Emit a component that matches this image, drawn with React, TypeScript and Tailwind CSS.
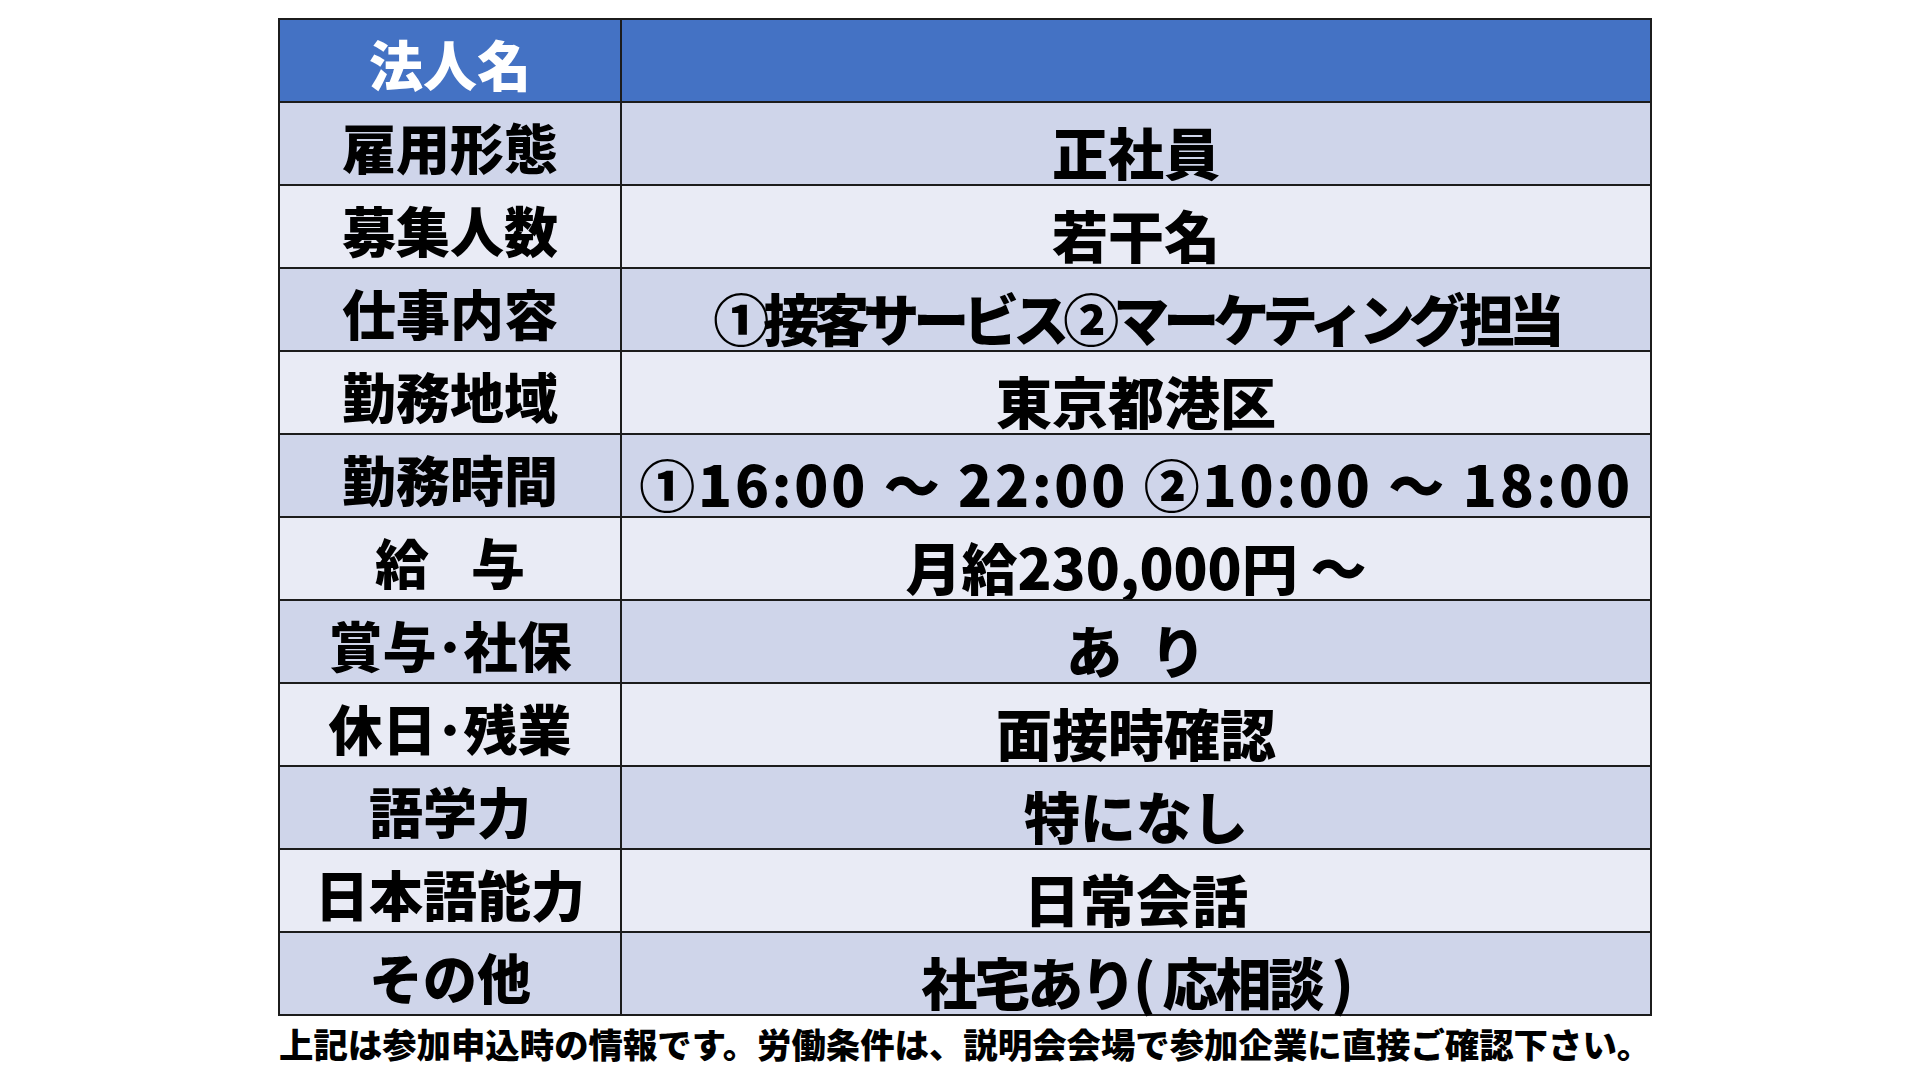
import React from "react";

type Row = { label: React.ReactNode; value: React.ReactNode; vt?: string };

const rows: Row[] = [
  { label: "雇用形態", value: "正社員" },
  { label: "募集人数", value: "若干名" },
  { label: "仕事内容", value: "①接客サービス②マーケティング担当", vt: "tracking-[-6px]" },
  { label: "勤務地域", value: "東京都港区" },
  { label: "勤務時間", value: "①16:00 ～ 22:00 ②10:00 ～ 18:00", vt: "tracking-[2.8px]" },
  {
    label: (
      <>
        給<span className="inline-block w-[42px]" />与
      </>
    ),
    value: "月給230,000円 ～",
  },
  { label: "賞与･社保", value: "あ\u2002り" },
  { label: "休日･残業", value: "面接時確認" },
  { label: "語学力", value: "特になし" },
  { label: "日本語能力", value: "日常会話" },
  { label: "その他", value: "社宅あり( 応相談 )", vt: "tracking-[-3px]" },
];

export default function App() {
  return (
    <div
      className="w-[1920px] h-[1080px] bg-white overflow-hidden"
      style={{ fontFamily: '"Noto Sans CJK JP", "Noto Sans", sans-serif' }}
    >
      <div className="ml-[278px] mt-[18px] w-[1374px] border-2 border-[#1c1c1c] flex flex-col">
        <div className="flex h-[81px] bg-[#4472c4]">
          <div className="w-[342px] border-r-2 border-[#1c1c1c] flex items-center justify-center pt-[6px] text-white text-[54px] font-black leading-none">
            法人名
          </div>
          <div className="flex-1" />
        </div>
        {rows.map((r, i) => (
          <div
            key={i}
            className={
              "flex h-[83px] border-t-2 border-[#1c1c1c] " +
              (i % 2 === 0 ? "bg-[#cfd5ea]" : "bg-[#e9ebf5]")
            }
          >
            <div className="w-[342px] border-r-2 border-[#1c1c1c] flex items-center justify-center pt-[6px] text-black text-[54px] font-black leading-none whitespace-nowrap">
              {r.label}
            </div>
            <div
              className={
                "flex-1 flex items-center justify-center pt-[14px] text-black text-[56px] font-black leading-none whitespace-nowrap " +
                (r.vt ?? "")
              }
            >
              {r.value}
            </div>
          </div>
        ))}
      </div>
      <div className="ml-[279px] mt-[10px] text-[34.4px] font-black leading-none text-black whitespace-nowrap">
        上記は参加申込時の情報です。労働条件は、説明会会場で参加企業に直接ご確認下さい。
      </div>
    </div>
  );
}
